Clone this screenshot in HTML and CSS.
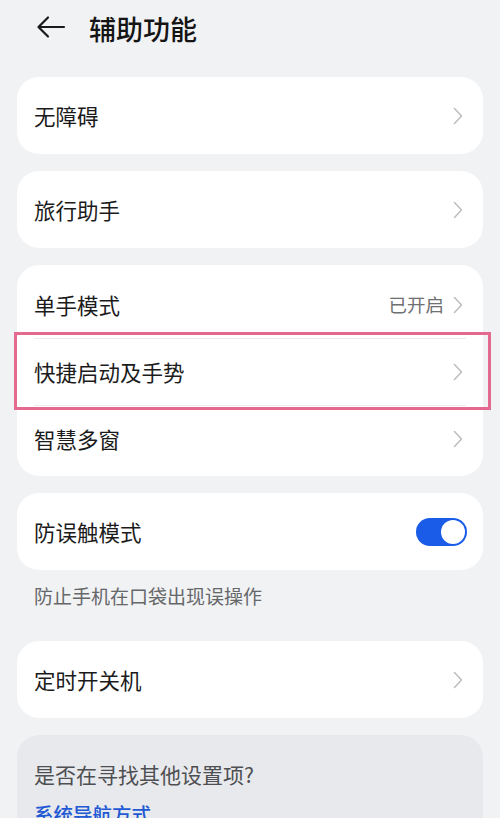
FILE: index.html
```html
<!DOCTYPE html>
<html lang="zh">
<head>
<meta charset="utf-8">
<link rel="stylesheet" href="styles.css">
</head>
<body>
<div class="page">
  <header class="header">
    <svg class="back" width="30" height="24" viewBox="0 0 30 24"><path d="M28 12H3M12 2.5L2.5 12 12 21.5" fill="none" stroke="#1a1a1a" stroke-width="2.2" stroke-linecap="round" stroke-linejoin="round"/></svg>
    <h1 class="title">辅助功能</h1>
  </header>

  <div class="card">
    <div class="row"><span class="label">无障碍</span><span class="end"><svg class="chev" width="10" height="18" viewBox="0 0 10 18"><path d="M1.5 1.5L8.5 9 1.5 16.5" fill="none" stroke="#bcbdc0" stroke-width="1.5" stroke-linecap="round" stroke-linejoin="round"/></svg></span></div>
  </div>

  <div class="card">
    <div class="row"><span class="label">旅行助手</span><span class="end"><svg class="chev" width="10" height="18" viewBox="0 0 10 18"><path d="M1.5 1.5L8.5 9 1.5 16.5" fill="none" stroke="#bcbdc0" stroke-width="1.5" stroke-linecap="round" stroke-linejoin="round"/></svg></span></div>
  </div>

  <div class="card group">
    <div class="row sub"><span class="label">单手模式</span><span class="end"><span class="value">已开启</span><svg class="chev" width="10" height="18" viewBox="0 0 10 18"><path d="M1.5 1.5L8.5 9 1.5 16.5" fill="none" stroke="#bcbdc0" stroke-width="1.5" stroke-linecap="round" stroke-linejoin="round"/></svg></span></div>
    <div class="row sub divided highlight"><span class="label">快捷启动及手势</span><span class="end"><svg class="chev" width="10" height="18" viewBox="0 0 10 18"><path d="M1.5 1.5L8.5 9 1.5 16.5" fill="none" stroke="#bcbdc0" stroke-width="1.5" stroke-linecap="round" stroke-linejoin="round"/></svg></span><span class="mark"></span></div>
    <div class="row sub divided"><span class="label">智慧多窗</span><span class="end"><svg class="chev" width="10" height="18" viewBox="0 0 10 18"><path d="M1.5 1.5L8.5 9 1.5 16.5" fill="none" stroke="#bcbdc0" stroke-width="1.5" stroke-linecap="round" stroke-linejoin="round"/></svg></span></div>
  </div>

  <div class="card">
    <div class="row"><span class="label">防误触模式</span><span class="toggle"><span class="knob"></span></span></div>
  </div>
  <p class="desc">防止手机在口袋出现误操作</p>

  <div class="card">
    <div class="row"><span class="label">定时开关机</span><span class="end"><svg class="chev" width="10" height="18" viewBox="0 0 10 18"><path d="M1.5 1.5L8.5 9 1.5 16.5" fill="none" stroke="#bcbdc0" stroke-width="1.5" stroke-linecap="round" stroke-linejoin="round"/></svg></span></div>
  </div>

  <div class="card hint">
    <p class="hint-title">是否在寻找其他设置项?</p>
    <p class="hint-link">系统导航方式</p>
  </div>
</div>
</body>
</html>
```

FILE: styles.css
```css
* { box-sizing: border-box; }
html, body {
  margin: 0;
  padding: 0;
  background: #f1f2f4;
  height: 818px;
  overflow: hidden;
}
body {
  font-family: "Noto Sans CJK SC", "Noto Sans", sans-serif;
  color: #1b1b1b;
}
.page {
  padding: 0 17px;
}
.header {
  height: 57px;
  display: flex;
  align-items: center;
  padding-left: 19px;
}
.back {
  display: block;
  margin-top: -3px;
}
.title {
  margin: -1px 0 0 23px;
  font-size: 27px;
  font-weight: 500;
  line-height: 1;
  color: #151515;
}
.card {
  background: #fff;
  border-radius: 22px;
  padding: 0 17px;
  margin-top: 20px;
}
.card + .card { margin-top: 17px; }
.row {
  height: 77px;
  display: flex;
  align-items: center;
  justify-content: space-between;
}
.label {
  font-size: 21.5px;
  line-height: 1;
}
.end {
  display: flex;
  align-items: center;
  gap: 9px;
  padding-right: 3px;
}
.chev { display: block; }
.value {
  font-size: 18.5px;
  color: #6f7073;
  line-height: 1;
}
.group {
  padding-top: 6px;
  padding-bottom: 4px;
}
.row.sub { height: 67px; }
.row.divided { border-top: 1px solid #ebebed; }
.highlight { position: relative; }
.mark {
  position: absolute;
  top: -7px;
  bottom: -5px;
  left: -20px;
  right: -25px;
  border: 3px solid #e4698f;
  pointer-events: none;
}
.toggle {
  width: 51px;
  height: 28px;
  border-radius: 14px;
  background: #1a5ce8;
  position: relative;
  margin-right: -1px;
  margin-top: 1px;
}
.knob {
  position: absolute;
  right: 2px;
  top: 2px;
  width: 24px;
  height: 24px;
  border-radius: 50%;
  background: #fff;
}
.desc {
  margin: 0;
  padding: 13px 17px 0;
  height: 71px;
  font-size: 19px;
  line-height: 25px;
  color: #666769;
}
.desc + .card { margin-top: 0; }
.card.hint {
  background: #e8e9ec;
  margin-top: 17px;
  padding-top: 25px;
  height: 140px;
}
.hint-title {
  margin: 0;
  font-size: 21px;
  line-height: 28px;
  color: #4e4f52;
}
.hint-link {
  margin: 13px 0 0;
  font-size: 19.5px;
  line-height: 26px;
  color: #2159d4;
  font-weight: 500;
}
```
